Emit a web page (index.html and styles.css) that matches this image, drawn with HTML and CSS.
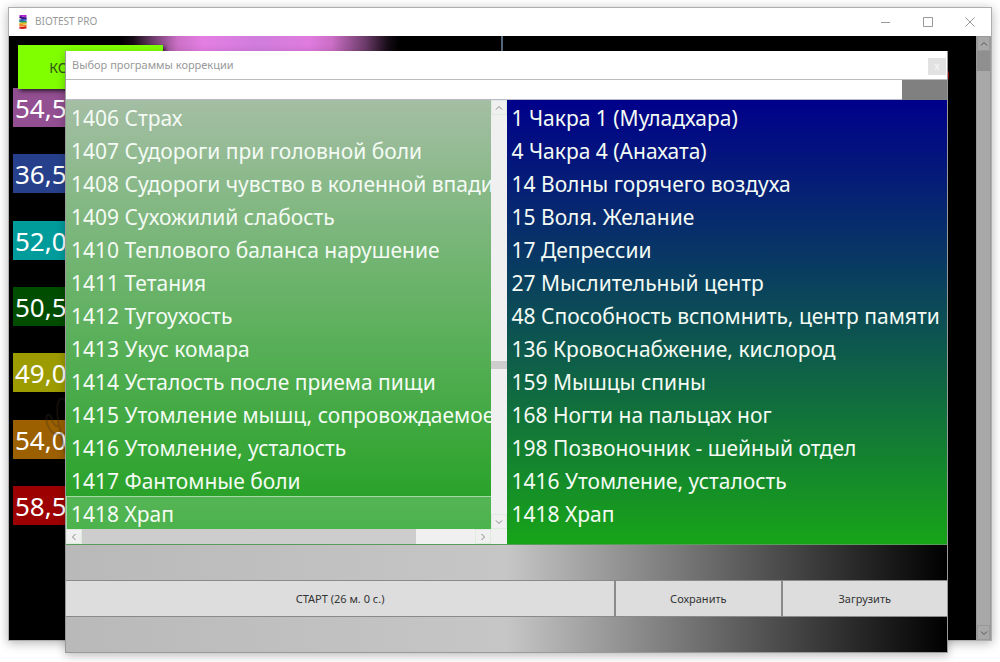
FILE: index.html
```html
<!DOCTYPE html>
<html lang="ru">
<head>
<meta charset="utf-8">
<title>BIOTEST PRO</title>
<link rel="stylesheet" href="styles.css">
</head>
<body>
<main class="window">
  <header class="titlebar">
    <svg class="logo" viewBox="0 0 10 14" aria-hidden="true">
      <path d="M1.5 1.2Q5 .4 8.5 1.2" stroke="#b01fd8"/>
      <path d="M1.6 2.2Q4 3.4 8.6 3.3" stroke="#35106e"/>
      <path d="M8.6 4.8Q5 4.4 1.4 5.4" stroke="#3a56c8"/>
      <path d="M1.4 6.2Q4 7.4 8.6 7" stroke="#1c8c6c"/>
      <path d="M8.6 8.4Q5 8.2 1.4 9" stroke="#d8c22a"/>
      <path d="M1.4 9.8Q4 10.8 8.6 10.6" stroke="#ef8420"/>
      <path d="M8.4 12.2Q5 13.4 1.4 12.6" stroke="#d61818"/>
    </svg>
    <h1 class="title">BIOTEST PRO</h1>
    <div class="controls">
      <button class="control" aria-label="Свернуть"><svg viewBox="0 0 10 10"><path d="M0 5.5H9"/></svg></button>
      <button class="control" aria-label="Развернуть"><svg viewBox="0 0 10 10"><path d="M.5 .5H9.5V9.5H.5Z"/></svg></button>
      <button class="control" aria-label="Закрыть"><svg viewBox="0 0 10 10"><path d="M.5 .5L9.5 9.5M9.5 .5L.5 9.5"/></svg></button>
    </div>
  </header>
  <div class="workspace">
    <div class="canvas">
      <div class="glow"></div>
      <div class="divider"></div>
      <div class="mark"></div>
      <button class="correct">КОРРЕКЦИЯ</button>
      <div class="readouts">
        <div class="readout violet">54,5</div>
        <div class="readout blue">36,5</div>
        <div class="readout cyan">52,0</div>
        <div class="readout green">50,5</div>
        <div class="readout yellow">49,0</div>
        <div class="readout orange">54,0</div>
        <div class="readout red">58,5</div>
      </div>
      <svg class="sketch" viewBox="0 0 40 60" aria-hidden="true"><path d="M4 18Q2 26 8 34M4 18Q8 16 9 24Q14 32 16 28Q12 8 17 2Q22 0 24 8M8 34Q14 40 22 36M16 28Q20 44 22 56"/></svg>
    </div>
    <div class="scroll main-scroll">
      <button class="arrow" aria-label="Вверх"><svg viewBox="0 0 8 8"><path d="M1 5.5L4 2.5L7 5.5"/></svg></button>
      <div class="thumb"></div>
      <button class="arrow end" aria-label="Вниз"><svg viewBox="0 0 8 8"><path d="M1 2.5L4 5.5L7 2.5"/></svg></button>
    </div>
  </div>
</main>

<section class="dialog" role="dialog" aria-labelledby="dialog-title">
  <header class="dialog-bar">
    <h2 class="title" id="dialog-title">Выбор программы коррекции</h2>
    <button class="dialog-close" aria-label="Закрыть">x</button>
  </header>
  <div class="search">
    <input class="search-box" type="text" aria-label="Поиск программы">
    <button class="search-button" aria-label="Найти"></button>
  </div>
  <div class="lists">
    <div class="pane">
      <ul class="list source" role="listbox" aria-label="Программы">
        <li class="row" role="option">1406 Страх</li>
        <li class="row" role="option">1407 Судороги при головной боли</li>
        <li class="row" role="option">1408 Судороги чувство в коленной впадине</li>
        <li class="row" role="option">1409 Сухожилий слабость</li>
        <li class="row" role="option">1410 Теплового баланса нарушение</li>
        <li class="row" role="option">1411 Тетания</li>
        <li class="row" role="option">1412 Тугоухость</li>
        <li class="row" role="option">1413 Укус комара</li>
        <li class="row" role="option">1414 Усталость после приема пищи</li>
        <li class="row" role="option">1415 Утомление мышц, сопровождаемое</li>
        <li class="row" role="option">1416 Утомление, усталость</li>
        <li class="row" role="option">1417 Фантомные боли</li>
        <li class="row selected" role="option" aria-selected="true">1418 Храп</li>
      </ul>
      <div class="scroll">
        <button class="arrow" aria-label="Вверх"><svg viewBox="0 0 8 8"><path d="M1 5.5L4 2.5L7 5.5"/></svg></button>
        <div class="space"></div>
        <div class="thumb"></div>
        <button class="arrow end" aria-label="Вниз"><svg viewBox="0 0 8 8"><path d="M1 2.5L4 5.5L7 2.5"/></svg></button>
      </div>
      <div class="hscroll">
        <button class="arrow" aria-label="Влево"><svg viewBox="0 0 8 8"><path d="M5.5 1L2.5 4L5.5 7"/></svg></button>
        <div class="hthumb"></div>
        <div class="hspace"></div>
        <button class="arrow" aria-label="Вправо"><svg viewBox="0 0 8 8"><path d="M2.5 1L5.5 4L2.5 7"/></svg></button>
      </div>
      <div class="corner"></div>
    </div>
    <ul class="list chosen" role="listbox" aria-label="Выбранные программы">
      <li class="row" role="option">1 Чакра 1 (Муладхара)</li>
      <li class="row" role="option">4 Чакра 4 (Анахата)</li>
      <li class="row" role="option">14 Волны горячего воздуха</li>
      <li class="row" role="option">15 Воля. Желание</li>
      <li class="row" role="option">17 Депрессии</li>
      <li class="row" role="option">27 Мыслительный центр</li>
      <li class="row" role="option">48 Способность вспомнить, центр памяти</li>
      <li class="row" role="option">136 Кровоснабжение, кислород</li>
      <li class="row" role="option">159 Мышцы спины</li>
      <li class="row" role="option">168 Ногти на пальцах ног</li>
      <li class="row" role="option">198 Позвоночник - шейный отдел</li>
      <li class="row" role="option">1416 Утомление, усталость</li>
      <li class="row" role="option">1418 Храп</li>
    </ul>
  </div>
  <div class="band"></div>
  <div class="actions">
    <button class="action">СТАРТ (26 м. 0 с.)</button>
    <button class="action">Сохранить</button>
    <button class="action">Загрузить</button>
  </div>
  <div class="band"></div>
</section>
</body>
</html>
```
FILE: styles.css
```css
* {
  box-sizing: border-box;
}

body {
  margin: 0;
  min-height: 100vh;
  padding: 7px 8px 21px;
  display: flex;
  position: relative;
  overflow: hidden;
  background: #fff;
  font-family: "Noto Sans", "Open Sans", sans-serif;
  font-size: 11px;
}

button {
  margin: 0;
  padding: 0;
  border: 0;
  font-family: inherit;
}

svg {
  display: block;
  fill: none;
}

.window {
  flex: 1;
  display: flex;
  flex-direction: column;
  border: 1px solid #adadad;
  background: #fff;
  box-shadow: 0 2px 10px rgba(0, 0, 0, .3);
}

.titlebar {
  height: 28px;
  display: flex;
  align-items: center;
  padding-left: 9px;
}

.logo {
  width: 10px;
  height: 14px;
  margin-right: 7px;
  stroke-width: 2;
}

.title {
  flex: 1;
  margin: 0;
  padding-bottom: 2px;
  color: #999;
  font-size: 11px;
  font-weight: 400;
}

.titlebar .title {
  font-size: 10px;
}

.controls {
  display: flex;
}

.control {
  width: 42px;
  height: 28px;
  display: grid;
  place-items: center;
  padding-bottom: 1px;
  background: none;
}

.control svg {
  width: 10px;
  height: 10px;
  stroke: #999;
}

.workspace {
  flex: 1;
  display: flex;
}

.canvas {
  flex: 1;
  position: relative;
  padding: 9px 4px;
  background: #000;
}

.glow {
  position: absolute;
  top: 0;
  left: 110px;
  width: 280px;
  height: 24px;
  background: linear-gradient(90deg, #000, #170c17 5%, #6b3b69 12%, #cb71c6 21%, #e47ee4 30%, #d07ddd 50%, #e07be0 68%, #cb6fc6 76%, #6b3b69 88%, #170c17 96%, #000);
}

.divider {
  position: absolute;
  top: 0;
  left: 50%;
  width: 2px;
  height: 24px;
  margin-left: 8px;
  background: #53687c;
}

.mark {
  position: absolute;
  top: 34px;
  right: 27px;
  width: 6px;
  height: 10px;
  border-radius: 3px;
  background: #a00000;
}

.correct {
  position: relative;
  display: block;
  width: 145px;
  height: 44px;
  margin-left: 5px;
  background: #80ff00;
  color: #2f5414;
  font-size: 14px;
  line-height: 46px;
  box-shadow: 2px 2px 4px rgba(0, 0, 0, .7);
}

.readouts {
  display: grid;
  align-content: space-between;
  width: 100px;
  height: 437px;
  margin-top: -1px;
}

.readout {
  height: 39px;
  padding-left: 2px;
  color: #fff;
  font-size: 26px;
  line-height: 41px;
}

.violet { background: #924f92; }
.blue { background: #26408b; }
.cyan { background: #009c9c; }
.green { background: #004d00; }
.yellow { background: #9c9c00; }
.orange { background: #9c6000; }
.red { background: #9c0000; }

.sketch {
  position: absolute;
  top: 361px;
  left: 34px;
  width: 40px;
  height: 60px;
  stroke: rgba(60, 50, 40, .3);
  stroke-width: 2;
}

.scroll {
  width: 16px;
  display: flex;
  flex-direction: column;
  background: #f0f0f0;
}

.arrow {
  width: 16px;
  height: 15px;
  display: grid;
  place-items: center;
  border: 1px solid #e0ebe0;
  background: #f0f0f0;
}

.arrow svg {
  width: 8px;
  height: 8px;
  stroke: #888;
}

.end {
  margin-top: auto;
}

.thumb {
  height: 8px;
  background: #cdcdcd;
}

.space {
  height: 246px;
}

.main-scroll {
  width: 15px;
  border: 1px solid #999;
  border-width: 0 1px;
  background: #a8a8a8;
}

.main-scroll .arrow {
  width: 13px;
  border-color: #999;
  background: #a8a8a8;
}

.main-scroll .arrow svg {
  stroke: #555;
}

.main-scroll .thumb {
  height: 20px;
  background: #8f8f8f;
}

.dialog {
  position: absolute;
  top: 51px;
  left: 65px;
  right: 52px;
  border: 1px solid #999;
  border-top: 0;
  background: #fff;
  box-shadow: 0 3px 9px rgba(0, 0, 0, .25);
}

.dialog-bar {
  height: 29px;
  display: flex;
  align-items: center;
  padding-left: 6px;
  border-bottom: 1px solid #bbb;
}

.dialog-close {
  width: 18px;
  height: 17px;
  margin: 2px 1px 0 0;
  background: #e2e2e2;
  color: #f8f8f8;
  font-size: 10px;
  line-height: 16px;
}

.search {
  height: 20px;
  display: flex;
}

.search-box {
  flex: 1;
  min-width: 0;
  padding: 0 6px;
  border: 0;
  border-bottom: 1px solid #b9b9c9;
  font: inherit;
}

.search-button {
  width: 45px;
  background: #808080;
}

.lists {
  display: grid;
  grid-template-columns: 1fr 1fr;
  border-bottom: 1px solid #5a9a5a;
}

.pane {
  display: grid;
  grid-template-columns: minmax(0, 1fr) 16px;
  grid-template-rows: auto 15px;
}

.list {
  min-width: 0;
  margin: 0;
  padding: 0;
  overflow: hidden;
  list-style: none;
  color: #f4fbf4;
  font-size: 21px;
  line-height: 32px;
}

.source {
  background: linear-gradient(#a4bea4, #5cb05c 54%, #20a020);
}

.chosen {
  background: linear-gradient(#00008b, #0c4f54 50%, #18a418);
}

.row {
  height: 33px;
  padding: 2px 0 0 5px;
  overflow: hidden;
  white-space: nowrap;
}

.selected {
  padding: 1px 0 0 4px;
  border: 1px solid #a5d8a5;
  border-width: 1px 0 0 1px;
  background: rgba(255, 255, 255, .2);
}

.hscroll {
  display: flex;
  background: #f0f0f0;
}

.hthumb {
  flex: 335;
  background: #cdcdcd;
}

.hspace {
  flex: 59;
}

.corner {
  background: #f0f0f0;
}

.band {
  height: 35px;
  background: linear-gradient(90deg, #b9b9b9, #c6c6c6 50%, #000);
}

.actions {
  display: grid;
  grid-template-columns: 10fr 3fr 3fr;
  gap: 2px;
  border: 1px solid #8a8a8a;
  border-width: 1px 0;
  background: #8a8a8a;
}

.action {
  height: 35px;
  background: #ddd;
  color: #333;
  font-size: 11px;
}
```
